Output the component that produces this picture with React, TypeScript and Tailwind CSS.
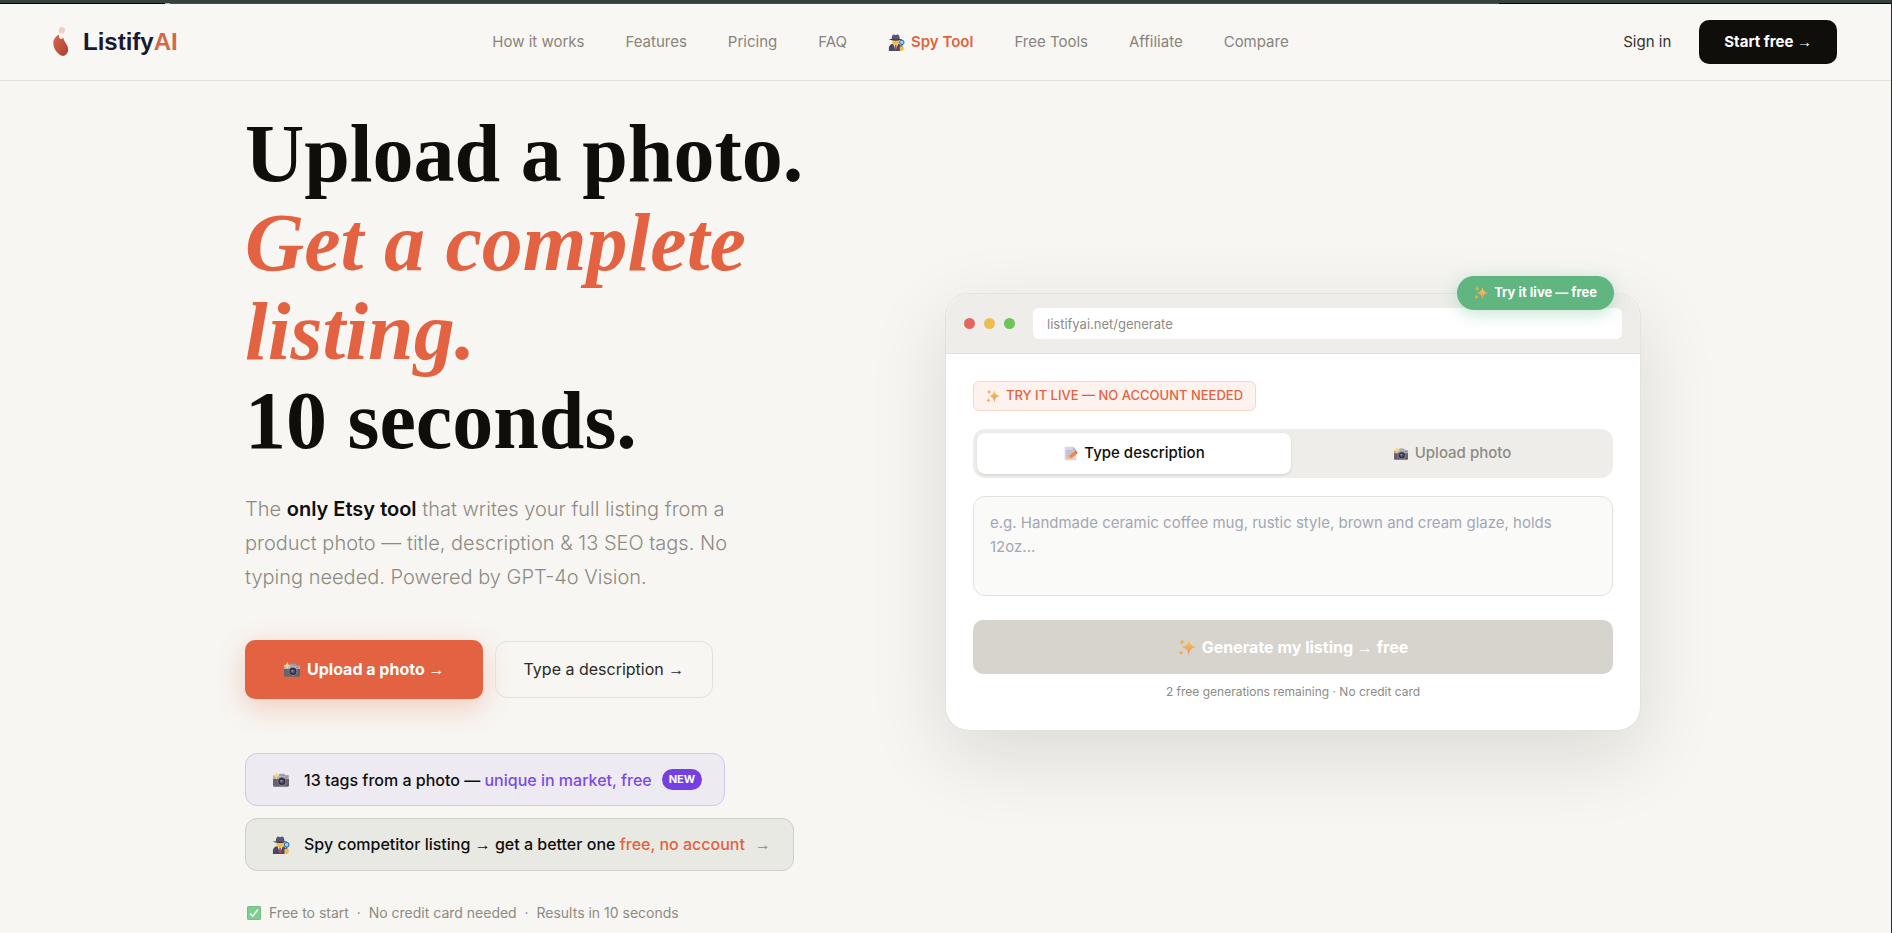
import type { ReactNode } from 'react';

type IconProps = { className?: string };

const CameraIcon = ({ className }: IconProps) => (
  <svg viewBox="0 0 20 18" className={className} aria-hidden="true">
    <path d="M2 4h16v2H2z" fill="#b9b7c4" />
    <path d="M7 3.5 8.5 2h5L15 3.5V5H7z" fill="#a3a1ae" />
    <rect x="1" y="4" width="18" height="12.5" rx="1.2" fill="#66636f" />
    <rect x="1" y="4" width="18" height="4" rx="1" fill="#b4b2bf" />
    <rect x="15" y="5" width="2.5" height="1.5" fill="#85838f" />
    <circle cx="11" cy="10.6" r="4.9" fill="#8d8b99" />
    <circle cx="11" cy="10.6" r="4" fill="#302d3d" />
    <circle cx="11" cy="10.6" r="2.3" fill="#5d5873" />
    <circle cx="10.2" cy="9.8" r="0.8" fill="#b9b4d6" />
    <path
      d="M4.6 0 5.900 2.800 8.700 4.100 5.900 5.400 4.600 8.200 3.300 5.400.5 4.100 3.300 2.800z"
      fill="#f5d777"
    />
  </svg>
);

const DetectiveIcon = ({ className }: IconProps) => (
  <svg viewBox="0 0 20 20" className={className} aria-hidden="true">
    <path d="M1 20v-3.500c0-3 2.400-5 5.500-5h4.500c3 0 5 2 5 5V20z" fill="#4d4764" />
    <path d="M6 11.500h6L9 19z" fill="#eee9e6" />
    <path d="M8.300 12.500h1.500l.6 5L9 20l-1.300-2.500z" fill="#b8465b" />
    <path d="M5 6h8.500v3.500c0 2-1.800 3.500-4.200 3.500S5 11.500 5 9.500z" fill="#f2bd45" />
    <path d="M1 6.200C3 5.200 15 5.200 17 6.200c-3.500 2.200-12.500 2.200-16 0z" fill="#3b3750" />
    <path d="M4.300 5.600C4.300 2 6 .2 7.500.8l1.500.5 1.500-.5c1.800-.6 3.300 1.200 3.300 4.800-2.500 1-7 1-9.500 0z" fill="#5b5478" />
    <circle cx="16.300" cy="9.800" r="2.500" fill="#8fdcfa" stroke="#3572b5" strokeWidth="1.200" />
    <path d="M15.600 12.500H17v4h-1.400z" fill="#42405a" />
    <path d="M13.800 15c1-1 4.200-1 4.700.3V18c0 1.300-1 2-2.300 2h-2.400z" fill="#f2bd45" />
  </svg>
);

const SparklesIcon = ({ className }: IconProps) => (
  <svg viewBox="0 0 20 20" className={className} aria-hidden="true">
    <defs>
      <linearGradient id="spark" x1="0" y1="0" x2="0" y2="1">
        <stop offset="0" stopColor="#f4d25c" />
        <stop offset="1" stopColor="#ea8a62" />
      </linearGradient>
    </defs>
    <g fill="url(#spark)">
      <path d="M12 1.500c1 5.500 2.700 7.300 8 8.500-5.300 1.200-7 3-8 9.500-1-6.500-2.700-8.300-8-9.500 5.300-1.200 7-3 8-8.500z" />
      <path d="M4.500.5c.4 2.400 1.200 3.100 3.500 3.700-2.300.6-3.100 1.300-3.500 3.700C4.100 5.500 3.300 4.800 1 4.200 3.300 3.600 4.100 2.900 4.500.5z" />
      <path d="M3.500 12.500c.4 2.300 1.200 2.900 3.200 3.500-2 .6-2.800 1.200-3.200 3.500-.4-2.300-1.200-2.900-3.200-3.500 2-.6 2.800-1.200 3.200-3.500z" />
    </g>
  </svg>
);

const MemoIcon = ({ className }: IconProps) => (
  <svg viewBox="0 0 18 18" className={className} aria-hidden="true">
    <path d="M2 1h10l4 4v12H2z" fill="#d9d3e3" />
    <path d="M12 1v4h4z" fill="#b5adc4" />
    <path d="M4 6h8M4 8.500h8M4 11h5M4 13.500h3" stroke="#a9a1b8" strokeWidth="1" />
    <path d="m6 16 1-4 6.500-5.500 3 3L10 15z" fill="#ef8a47" />
    <path d="m13.500 6.500 1.500-1 2.500 2.500-1 1.500z" fill="#e2533f" />
    <path d="m6 16 1-4 3 3z" fill="#f3c79b" />
  </svg>
);

const CheckIcon = ({ className }: IconProps) => (
  <svg viewBox="0 0 16 16" className={className} aria-hidden="true">
    <rect x="0.500" y="0.500" width="15" height="15" rx="1" fill="#7fce90" stroke="#62b878" />
    <path d="m3.500 8.500 3 3.200 6-7.700" fill="none" stroke="#fff" strokeWidth="1.500" />
  </svg>
);

const LogoMark = () => (
  <svg viewBox="0 0 16 30" className="h-[30px] w-4" aria-hidden="true">
    <defs>
      <linearGradient id="mark" x1="0" y1="0" x2="1" y2="1">
        <stop offset="0" stopColor="#d9694a" />
        <stop offset="1" stopColor="#a93f33" />
      </linearGradient>
    </defs>
    <circle cx="8.800" cy="3.200" r="3.100" fill="#efcdc0" />
    <path
      d="M5.600 7.500c.4 2 .8 3.800 1.700 4.300 1.200.8 2-.2 2.900-1.300.6 2.800 1.700 4.300 3.200 6.800 2.200 3.700 2.400 6.500.5 9.300-1.900 2.700-4.900 3.100-7.500.9C2.500 24.500.3 20.300.3 16.300c0-4 2.500-6.800 5.300-8.800z"
      fill="url(#mark)"
    />
  </svg>
);

const Arrow = () => (
  <span className="font-['Liberation_Sans',sans-serif] font-normal">→</span>
);

const NAV_BEFORE = ['How it works', 'Features', 'Pricing', 'FAQ'];
const NAV_AFTER = ['Free Tools', 'Affiliate', 'Compare'];

const NavLink = ({ children }: { children: ReactNode }) => (
  <a href="#" className="text-[15px] text-[#86847d]">
    {children}
  </a>
);

const TopStrip = () => (
  <div>
    <div className="h-[3px] bg-[#34423f]" />
    <div className="flex h-px bg-[#4a4f4b]">
      <span className="w-[165px] bg-black" />
      <span className="w-[5px] bg-[#8fbcae]" />
      <span className="ml-auto w-[392px] bg-black" />
    </div>
  </div>
);

const Header = () => (
  <header className="flex h-[77px] items-center justify-between border-b border-[#e4e1d8] bg-[#f9f7f3] pr-[54px] pl-[53px]">
    <a href="#" className="flex items-center gap-3.5">
      <LogoMark />
      <span className="font-['Liberation_Sans',sans-serif] text-2xl font-bold text-[#1a1830]">
        Listify<span className="text-[#d2694a]">AI</span>
      </span>
    </a>
    <nav className="flex items-center gap-[41px] pr-5">
      {NAV_BEFORE.map((label) => (
        <NavLink key={label}>{label}</NavLink>
      ))}
      <a
        href="#"
        className="flex items-center gap-1.5 text-[15px] font-semibold text-[#e36241]"
      >
        <DetectiveIcon className="size-[17px]" />
        Spy Tool
      </a>
      {NAV_AFTER.map((label) => (
        <NavLink key={label}>{label}</NavLink>
      ))}
    </nav>
    <div className="flex items-center gap-7">
      <a href="#" className="text-[15px] text-[#33322e]">
        Sign in
      </a>
      <button className="h-11 rounded-[10px] bg-[#0f0e0b] px-[25px] text-[15px] font-bold text-white">
        Start free <Arrow />
      </button>
    </div>
  </header>
);

const Intro = () => (
  <section>
    <h1 className="font-['Liberation_Serif',serif] text-[82px] leading-[89px] font-bold text-[#0f0e0b]">
      Upload a photo.
      <br />
      <em className="text-[#e36241]">
        Get a complete
        <br />
        listing.
      </em>
      <br />
      10 seconds.
    </h1>
    <p className="mt-[27px] max-w-[500px] text-xl leading-[34px] font-light text-[#8d8b84]">
      The <strong className="font-semibold text-[#0f0e0b]">only Etsy tool</strong>{' '}
      that writes your full listing from a product photo — title, description &amp;
      13 SEO tags. No typing needed. Powered by GPT-4o Vision.
    </p>
    <div className="mt-[46px] flex items-center gap-3">
      <button className="flex h-[59px] items-center gap-1.5 rounded-[10px] bg-[#e36241] px-[38px] text-base font-bold text-white shadow-[0_8px_28px_rgba(227,98,65,0.3)]">
        <CameraIcon className="h-4 w-[18px]" />
        <span>
          Upload a photo <Arrow />
        </span>
      </button>
      <button className="h-[57px] rounded-xl border border-[#e4e1d8] px-7 text-base text-[#2a2925]">
        Type a description <Arrow />
      </button>
    </div>
    <div className="mt-[54px] flex flex-col items-start gap-3">
      <a
        href="#"
        className="flex h-[53px] items-center gap-3.5 rounded-xl border border-[#d4c6f0] bg-[#eeeaf2] pr-[22px] pl-[26px] text-base font-medium text-[#0f0e0b]"
      >
        <CameraIcon className="h-4 w-[18px]" />
        <span className="flex items-center gap-2.5">
          <span>
            13 tags from a photo —{' '}
            <span className="text-[#7c4be4]">unique in market, free</span>
          </span>
          <span className="rounded-full bg-[#7540e2] px-[7px] text-[11px] leading-[21px] font-bold text-white">
            NEW
          </span>
        </span>
      </a>
      <a
        href="#"
        className="flex h-[53px] items-center gap-3.5 rounded-xl border border-[#cfcec9] bg-[#e9e9e4] pr-[22px] pl-[26px] text-base font-medium text-[#0f0e0b]"
      >
        <DetectiveIcon className="size-[18px]" />
        <span className="flex items-center gap-2.5">
          <span>
            Spy competitor listing <Arrow /> get a better one{' '}
            <span className="text-[#e36241]">free, no account</span>
          </span>
          <span className="text-[#8d8b84]">
            <Arrow />
          </span>
        </span>
      </a>
    </div>
    <p className="mt-8 flex items-center gap-2 pl-0.5 text-sm text-[#8d8b84]">
      <CheckIcon className="size-3.5" />
      <span className="whitespace-pre">
        {'Free to start  ·  No credit card needed  ·  Results in 10 seconds'}
      </span>
    </p>
  </section>
);

const DemoCard = () => (
  <section className="relative rounded-3xl border border-[#e4e2dc] bg-white shadow-[0_24px_80px_rgba(15,14,11,0.12)]">
    <div className="absolute -top-[18px] right-[26px] flex h-[34px] items-center gap-1.5 rounded-full bg-[#60b581] px-[17px] text-[13px] font-bold text-white shadow-[0_4px_16px_rgba(96,181,129,0.35)]">
      <SparklesIcon className="size-3.5" />
      Try it live — free
    </div>
    <div className="flex h-[60px] items-center gap-[18px] rounded-t-3xl border-b border-[#e2e0d6] bg-[#eeede9] px-[18px]">
      <div className="flex gap-[9px]">
        <span className="size-[11px] rounded-full bg-[#e3675f]" />
        <span className="size-[11px] rounded-full bg-[#edbd4f]" />
        <span className="size-[11px] rounded-full bg-[#6cc557]" />
      </div>
      <input
        type="text"
        readOnly
        aria-label="Address"
        value="listifyai.net/generate"
        className="h-[31px] min-w-0 flex-1 rounded-md bg-white px-3.5 text-[13px] text-[#8d8b84]"
      />
    </div>
    <div className="flex flex-col px-[27px] pt-[27px] pb-7">
      <p className="flex h-[30px] items-center gap-1.5 self-start rounded-md border border-[#f9d5ca] bg-[#fef2ef] px-3 text-[13px] font-medium text-[#e36241] uppercase">
        <SparklesIcon className="size-3.5" />
        Try it live — no account needed
      </p>
      <div className="mt-[18px] flex h-[49px] gap-1 rounded-xl bg-[#eeede9] p-1">
        <button className="flex flex-1 items-center justify-center gap-1.5 rounded-lg bg-white text-[15px] font-medium text-[#0f0e0b] shadow-sm">
          <MemoIcon className="size-[15px]" />
          Type description
        </button>
        <button className="flex flex-1 items-center justify-center gap-1.5 text-[15px] font-medium text-[#8d8b84]">
          <CameraIcon className="h-3.5 w-4" />
          Upload photo
        </button>
      </div>
      <textarea
        aria-label="Product description"
        placeholder="e.g. Handmade ceramic coffee mug, rustic style, brown and cream glaze, holds 12oz..."
        className="mt-[18px] h-[100px] resize-none rounded-xl border border-[#e4e2da] bg-[#fafaf8] px-4 py-3.5 text-[15px] leading-6 placeholder:text-[#a3a7b5]"
      />
      <button className="mt-6 flex h-[54px] items-center justify-center gap-1.5 rounded-[10px] bg-[#d7d4cd] text-base font-bold text-white">
        <SparklesIcon className="size-[18px]" />
        <span>
          Generate my listing <Arrow /> free
        </span>
      </button>
      <p className="mt-2 text-center text-xs leading-5 text-[#8d8b84]">
        2 free generations remaining · No credit card
      </p>
    </div>
  </section>
);

export default function App() {
  return (
    <div className="min-h-screen border-r border-[#2b2b2b] bg-[#f7f6f2] font-['Inter',sans-serif]">
      <TopStrip />
      <Header />
      <main className="pr-[5px]">
        <div className="mx-auto grid max-w-[1396px] grid-cols-2 items-center gap-1 pt-7">
          <Intro />
          <div className="pb-2">
            <DemoCard />
          </div>
        </div>
      </main>
    </div>
  );
}
